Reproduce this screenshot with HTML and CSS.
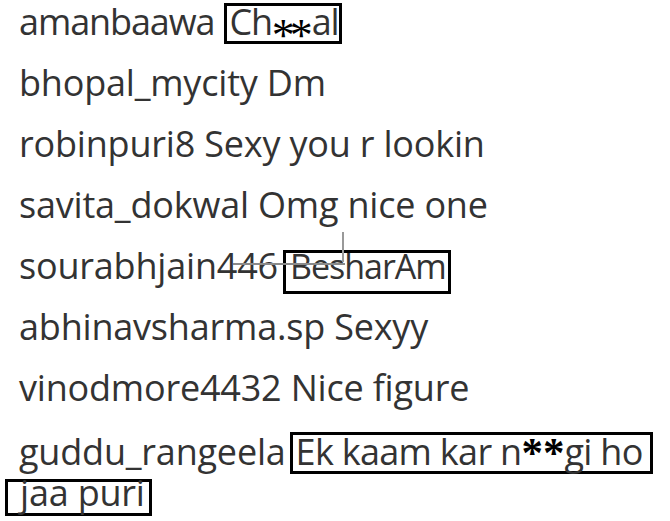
FILE: index.html
```html
<!DOCTYPE html>
<html>
<head>
<meta charset="utf-8">
<link rel="stylesheet" href="styles.css">
</head>
<body>
<div class="comments">
  <div class="row row-first"><span class="user">amanbaawa</span><span class="box box-chal">Ch<span class="ast ast-thin">**</span>al</span></div>
  <div class="row"><span class="user">bhopal_mycity</span> Dm</div>
  <div class="row"><span class="user">robinpuri8</span> Sexy you r lookin</div>
  <div class="row"><span class="user">savita_dokwal</span> Omg nice one</div>
  <div class="row row-strike"><span class="user">sourabhjain446</span><span class="box box-besh">BesharAm</span><span class="strike-h"></span><span class="strike-v"></span></div>
  <div class="row"><span class="user">abhinavsharma.sp</span> Sexyy</div>
  <div class="row"><span class="user">vinodmore4432</span> Nice figure</div>
  <div class="row row-last"><span class="user">guddu_rangeela</span><span class="box box-ek">Ek kaam kar n<span class="ast ast-bold">**</span>gi ho</span></div>
  <div class="row-wrap"><span class="box box-jaa">jaa puri</span></div>
</div>
</body>
</html>
```
FILE: styles.css
```css
html, body {
  margin: 0;
  padding: 0;
  background: #fff;
}
.comments {
  width: 670px;
  height: 521px;
  padding-left: 19px;
  padding-top: 2px;
  box-sizing: border-box;
  font-family: "Open Sans", "Noto Sans", sans-serif;
  font-size: 36px;
  letter-spacing: -0.2px;
  color: #333;
  display: flex;
  flex-direction: column;
}
.row {
  height: 61px;
  flex: none;
  line-height: 40px;
  white-space: nowrap;
  position: relative;
}
.row-first .user {
  letter-spacing: -1.1px;
}
.row-last {
  margin-top: 3px;
}
.box {
  display: inline-block;
  box-sizing: border-box;
  border: 3px solid #000;
  line-height: 24px;
  white-space: nowrap;
  overflow: visible;
}
.box-chal {
  margin-left: 10px;
  width: 118px;
  padding: 4px 0 5px 2px;
  letter-spacing: -1.2px;
}
.box-besh {
  margin-left: 5px;
  width: 168px;
  padding: 1px 0 13px 4px;
  font-size: 34px;
  letter-spacing: -1px;
}
.box-ek {
  margin-left: 4px;
  width: 363px;
  padding: 5px 0 7px 3px;
  letter-spacing: -0.7px;
}
.row-wrap {
  margin-left: -14px;
  margin-top: -20px;
  line-height: 40px;
  white-space: nowrap;
}
.box-jaa {
  width: 147px;
  line-height: 22px;
  padding: 0 0 9px 12px;
}
.ast {
  font-family: "Liberation Serif", "Times New Roman", serif;
  color: #000;
  line-height: 0;
}
.ast-thin {
  font-size: 46px;
  vertical-align: -16px;
  letter-spacing: -5px;
  margin-right: 4px;
}
.ast-bold {
  font-size: 43px;
  font-weight: bold;
  vertical-align: -2px;
  letter-spacing: 0;
}
.strike-h {
  position: absolute;
  left: 214px;
  top: 17px;
  width: 112px;
  height: 2px;
  background: #8a8a8a;
}
.strike-v {
  position: absolute;
  left: 323px;
  top: -14px;
  width: 2px;
  height: 30px;
  background: #999;
}
```
